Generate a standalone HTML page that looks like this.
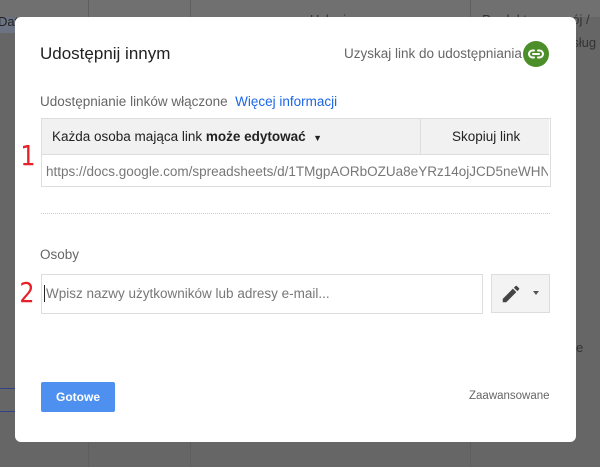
<!DOCTYPE html>
<html><head><meta charset="utf-8"><style>
body{margin:0;width:600px;height:467px;overflow:hidden;background:#666;font-family:"Liberation Sans",Arial,sans-serif;position:relative}
.a{position:absolute}
.bgl{position:absolute;background:#5e5e5e}
</style></head><body>
<div class="a" style="left:0;top:0;width:600px;height:17px;background:#707070"></div>
<div class="a" style="left:0;top:17px;width:88px;height:16px;background:#6c7382"></div>
<div class="a" style="left:-2px;top:14px;color:#222;font-size:13px">Data</div>
<div class="a" style="left:310px;top:12px;color:#333;font-size:13px">Usługi</div>
<div class="a" style="left:482px;top:12px;color:#333;font-size:13px">Produkty - rozwój / </div>
<div class="a" style="left:565px;top:35px;color:#333;font-size:13px">usług</div>
<div class="a" style="left:576px;top:340px;color:#333;font-size:13px">e</div>
<div class="bgl" style="left:88px;top:0;width:1px;height:467px"></div>
<div class="bgl" style="left:190px;top:0;width:1px;height:467px"></div>
<div class="bgl" style="left:470px;top:0;width:1px;height:467px"></div>
<div class="a" style="left:0;top:388px;width:15px;height:1px;background:#33418a"></div>
<div class="a" style="left:0;top:411px;width:15px;height:1px;background:#33418a"></div>

<div class="a" style="left:15px;top:17px;width:561px;height:425px;background:#fff;border-radius:6px"></div>
<div class="a" style="left:40px;top:44px;font-size:17px;color:#222">Udostępnij innym</div>
<div class="a" style="left:344px;top:46px;font-size:13.5px;color:#666">Uzyskaj link do udostępniania</div>
<div class="a" style="left:523px;top:41px;width:26px;height:26px;border-radius:50%;background:#4c8f2a">
<svg width="26" height="26" viewBox="0 0 26 26"><g fill="none" stroke="#fff" stroke-width="2" stroke-linecap="round"><path d="M11 9.5H9.5a3.5 3.5 0 0 0 0 7H11"/><path d="M15 9.5h1.5a3.5 3.5 0 0 1 0 7H15"/><line x1="10" y1="13" x2="16" y2="13"/></g></svg></div>
<div class="a" style="left:40px;top:94px;font-size:13.5px;color:#666">Udostępnianie linków włączone &nbsp;<span style="color:#1a66e6">Więcej informacji</span></div>

<div class="a" style="left:41px;top:118px;height:69px;border:1px solid #ddd;box-sizing:border-box;width:510px"></div>
<div class="a" style="left:42px;top:119px;width:507px;height:35px;background:#f1f1f1;border-bottom:1px solid #ddd"></div>
<div class="a" style="left:420px;top:119px;width:1px;height:35px;background:#ddd"></div>
<div class="a" style="left:52px;top:129px;font-size:13.5px;color:#222">Każda osoba mająca link <b>może edytować</b> &nbsp;<span style="font-size:9px">▼</span></div>
<div class="a" style="left:452px;top:129px;font-size:13.5px;color:#222">Skopiuj link</div>
<div class="a" style="left:46px;top:164px;width:502px;overflow:hidden;white-space:nowrap;font-size:13.5px;color:#777">https://docs.google.com/spreadsheets/d/1TMgpAORbOZUa8eYRz14ojJCD5neWHN</div>
<div class="a" style="left:19px;top:139px;font-size:28px;color:#e8202a;font-family:'DejaVu Sans',sans-serif;transform:scaleX(0.85)">1</div>

<div class="a" style="left:41px;top:213px;width:509px;border-top:1px dotted #ccc"></div>
<div class="a" style="left:40px;top:247px;font-size:13.5px;color:#666">Osoby</div>
<div class="a" style="left:41px;top:274px;width:442px;height:40px;border:1px solid #ddd;box-sizing:border-box"></div>
<div class="a" style="left:44px;top:285px;width:1px;height:17px;background:#222"></div>
<div class="a" style="left:46px;top:286px;font-size:13.5px;color:#777">Wpisz nazwy użytkowników lub adresy e-mail...</div>
<div class="a" style="left:18px;top:276px;font-size:28px;color:#e8202a;font-family:'DejaVu Sans',sans-serif;transform:scaleX(0.85)">2</div>
<div class="a" style="left:491px;top:274px;width:59px;height:39px;background:#f3f3f3;border:1px solid #ddd;box-sizing:border-box"></div>
<svg class="a" style="left:500px;top:283px" width="22" height="22" viewBox="0 0 24 24"><path fill="#444" d="M3 17.25V21h3.75L17.81 9.94l-3.75-3.75L3 17.25zM20.71 7.04a1 1 0 0 0 0-1.41l-2.34-2.34a1 1 0 0 0-1.41 0l-1.83 1.83 3.75 3.75 1.83-1.830z"/></svg>
<div class="a" style="left:533px;top:291px;width:0;height:0;border-left:3.5px solid transparent;border-right:3.5px solid transparent;border-top:4px solid #555"></div>

<div class="a" style="left:41px;top:382px;width:74px;height:30px;background:#4d90f0;border-radius:2px;color:#fff;font-size:12px;font-weight:bold;text-align:center;line-height:30px">Gotowe</div>
<div class="a" style="left:469px;top:390px;font-size:11.5px;color:#666">Zaawansowane</div>
</body></html>
